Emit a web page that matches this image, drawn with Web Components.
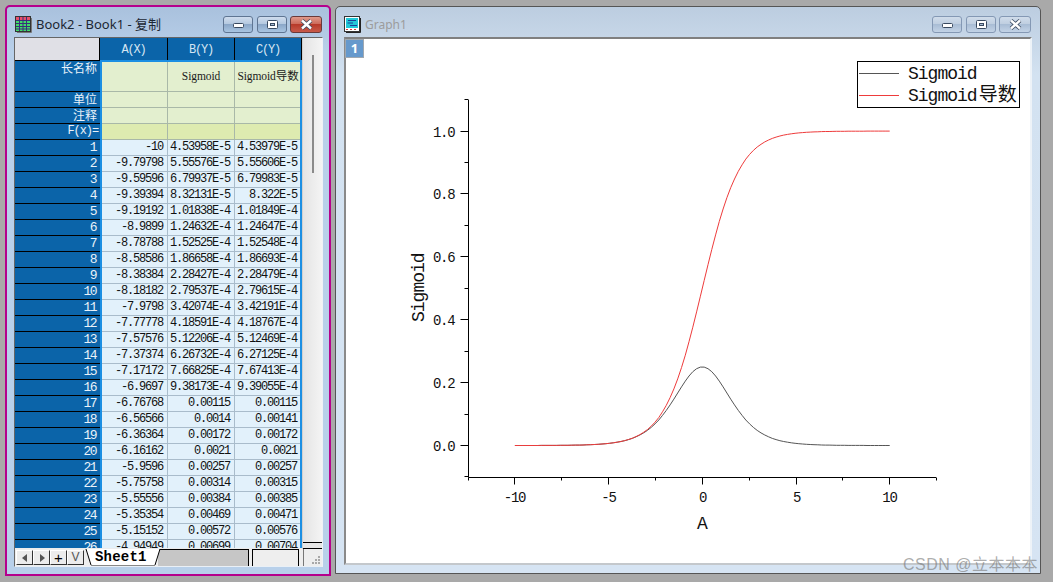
<!DOCTYPE html>
<html>
<head>
<meta charset="utf-8">
<title>Origin</title>
<style>
  html, body { margin: 0; padding: 0; background: #a9a9a9; }
</style>
</head>
<body>
<desk-top>
  <win-frame active title-text="Book2 - Book1 - 复制" icon="book">
    <work-sheet></work-sheet>
  </win-frame>
  <win-frame title-text="Graph1" icon="graph">
    <graph-plot></graph-plot>
  </win-frame>
  <water-mark>CSDN @立本本本</water-mark>
</desk-top>

<script>
class DeskTop extends HTMLElement {
  constructor() {
    super();
    this.attachShadow({ mode: "open" });
    this.shadowRoot.innerHTML = `
      <style>
        :host {
          display: flex;
          align-items: flex-start;
          gap: 4px;
          position: relative;
          width: 1053px;
          height: 582px;
          box-sizing: border-box;
          padding: 5px 0 0 5px;
          background: #a9a9a9;
          overflow: hidden;
        }
      </style>
      <slot></slot>
    `;
  }
}
customElements.define("desk-top", DeskTop);

const ICONS = {
  book: `<svg width="17" height="17" viewBox="0 0 17 17">
      <rect x="0.5" y="0.5" width="15" height="15" fill="#fff" stroke="#333"/>
      <rect x="1" y="1" width="14" height="3" fill="#e8506a"/>
      <rect x="1" y="5" width="14" height="10" fill="#3fdc6a"/>
      <path d="M1 4.5H15M1 7.5H15M1 10.5H15M1 13H15M4.5 1V15M8 1V15M11.5 1V15" stroke="#3a2f7a" stroke-width="1" fill="none"/>
      <path d="M16.5 2V16.5H2" stroke="#777" fill="none"/>
    </svg>`,
  graph: `<svg width="17" height="17" viewBox="0 0 17 17">
      <rect x="0.5" y="0.5" width="15" height="15" fill="#fff" stroke="#333"/>
      <rect x="2" y="2" width="12" height="10" fill="#22c8d8"/>
      <path d="M4 4.5H12M3.500 7H9M6 9.500H13" stroke="#1a3f9a" fill="none"/>
      <path d="M2 13.500H4M6 13.500H8M10 13.500H12" stroke="#d83a3a" fill="none"/>
      <path d="M16.500 2V16.500H2" stroke="#222" fill="none"/>
    </svg>`
};

class WinFrame extends HTMLElement {
  connectedCallback() {
    if (this.shadowRoot) return;
    this.attachShadow({ mode: "open" });
    const title = this.getAttribute("title-text") || "";
    const icon = ICONS[this.getAttribute("icon")] || "";
    this.shadowRoot.innerHTML = `
      <style>
        :host {
          display: flex;
          flex-direction: column;
          box-sizing: border-box;
          margin-top: 1px;
          width: 706px;
          height: 568px;
          padding: 0 8px 8px 8px;
          border: 1px solid #555;
          border-radius: 5px 5px 0 0;
          background: linear-gradient(#bccde0, #d3e2f1 12%, #d6e4f3);
          font-family: "Noto Sans", "Noto Sans CJK SC", sans-serif;
        }
        :host([active]) {
          margin-top: 0;
          width: 326px;
          height: 571px;
          padding: 0 6px 7px 7px;
          border: 2px solid #b5008c;
          background: linear-gradient(#a9c1dd, #b9d0ea 8%, #b8d0ea);
        }
        .bar { flex: none; height: 30px; display: flex; align-items: flex-start; }
        .ico { width: 17px; height: 17px; margin: 9px 4px 0 0; }
        :host([active]) .ico { margin-top: 9px; margin-left: 1px; margin-right: 4px; }
        .title {
          flex: 1;
          margin-top: 9px;
          font-size: 12px;
          line-height: 17px;
          color: #9c9c9c;
          white-space: nowrap;
        }
        :host([active]) .title { color: #1c2733; font-size: 13px; }
        .btns { display: flex; gap: 4px; margin-top: 9px; margin-right: 1px; }
        .b {
          width: 30px;
          height: 17px;
          box-sizing: border-box;
          border: 1px solid #8498b4;
          border-radius: 3px;
          background: linear-gradient(#d0dcea, #c0cfe1 45%, #a9bdd5 50%, #c3d3e6);
          display: flex;
          align-items: center;
          justify-content: center;
        }
        :host([active]) .b { background: linear-gradient(#cfdced, #b5c9e0 45%, #8ba7c8 50%, #a9c5e2); border-color: #5f7592; }
        :host([active]) .b.x { background: linear-gradient(#e09a8c, #cd6b5b 45%, #b73a2a 50%, #c85a4a); border-color: #6a3a3a; }
        .b.x { width: 32px; margin-left: -1px; }
        .body {
          flex: 1;
          min-height: 0;
          display: flex;
          border-top: 2px solid #808080;
          border-left: 2px solid #8a8a8a;
          border-right: 2px solid #eef3f8;
          border-bottom: 2px solid #c4c8cc;
          background: #fff;
        }
        :host([active]) .body { border: 0; border-top: 1px solid #666; border-left: 1px solid #666; border-bottom: 1px solid #eaf0f6; border-right: 1px solid #eef2f6; background: #ececec; }
      </style>
      <div class="bar">
        <span class="ico">${icon}</span>
        <span class="title">${title}</span>
        <div class="btns">
          <div class="b"><svg width="13" height="9" viewBox="0 0 13 9"><rect x="1.500" y="3.500" width="10" height="4" rx="1" fill="#fff" stroke="#3a4a60"/></svg></div>
          <div class="b"><svg width="13" height="11" viewBox="0 0 13 11"><rect x="1.500" y="1.500" width="10" height="8" rx="1" fill="#fff" stroke="#3a4a60"/><rect x="4.500" y="4.500" width="4" height="2" fill="#a9bdd5" stroke="#3a4a60"/></svg></div>
          <div class="b x"><svg width="15" height="11" viewBox="0 0 15 11"><path d="M3 1.500L12 9.500M12 1.500L3 9.500" stroke="#3a4a60" stroke-width="4"/><path d="M3 1.500L12 9.500M12 1.500L3 9.500" stroke="#fff" stroke-width="2.400"/></svg></div>
        </div>
      </div>
      <div class="body"><slot></slot></div>
    `;
  }
}
customElements.define("win-frame", WinFrame);

const ROWS = [
  ["-10", "4.53958E-5", "4.53979E-5"],
  ["-9.79798", "5.55576E-5", "5.55606E-5"],
  ["-9.59596", "6.79937E-5", "6.79983E-5"],
  ["-9.39394", "8.32131E-5", "8.322E-5"],
  ["-9.19192", "1.01838E-4", "1.01849E-4"],
  ["-8.9899", "1.24632E-4", "1.24647E-4"],
  ["-8.78788", "1.52525E-4", "1.52548E-4"],
  ["-8.58586", "1.86658E-4", "1.86693E-4"],
  ["-8.38384", "2.28427E-4", "2.28479E-4"],
  ["-8.18182", "2.79537E-4", "2.79615E-4"],
  ["-7.9798", "3.42074E-4", "3.42191E-4"],
  ["-7.77778", "4.18591E-4", "4.18767E-4"],
  ["-7.57576", "5.12206E-4", "5.12469E-4"],
  ["-7.37374", "6.26732E-4", "6.27125E-4"],
  ["-7.17172", "7.66825E-4", "7.67413E-4"],
  ["-6.9697", "9.38173E-4", "9.39055E-4"],
  ["-6.76768", "0.00115", "0.00115"],
  ["-6.56566", "0.0014", "0.00141"],
  ["-6.36364", "0.00172", "0.00172"],
  ["-6.16162", "0.0021", "0.0021"],
  ["-5.9596", "0.00257", "0.00257"],
  ["-5.75758", "0.00314", "0.00315"],
  ["-5.55556", "0.00384", "0.00385"],
  ["-5.35354", "0.00469", "0.00471"],
  ["-5.15152", "0.00572", "0.00576"],
  ["-4.94949", "0.00699", "0.00704"],
];

class WorkSheet extends HTMLElement {
  constructor() {
    super();
    this.attachShadow({ mode: "open" });
  }
  connectedCallback() {
    const labelRows = [
      ["长名称", "", "Sigmoid", "Sigmoid导数", "tall"],
      ["单位", "", "", "", ""],
      ["注释", "", "", "", ""],
      ["F(x)=", "", "", "", "fx"],
    ];
    // cells get an explicit place, the selection frame shares their grid tracks
    const at = (r, c) => `style="grid-area:${r}/${c}"`;
    let cells = `<div class="corner" ${at(1, 1)}></div>`;
    ["A(X)", "B(Y)", "C(Y)"].forEach((h, i) => { cells += `<div class="ch" ${at(1, i + 2)}>${h}</div>`; });
    labelRows.forEach((r, i) => {
      const cls = r[4], row = i + 2;
      cells += `<div class="rh lab ${cls}" ${at(row, 1)}>${r[0]}</div>`;
      cells += `<div class="c lab ${cls}" ${at(row, 2)}></div>`;
      cells += `<div class="c lab ${cls}" ${at(row, 3)}><span>${r[2]}</span></div>`;
      cells += `<div class="c lab ${cls}" ${at(row, 4)}><span>${r[3]}</span></div>`;
    });
    ROWS.forEach((r, i) => {
      cells += `<div class="rh num" ${at(i + 6, 1)}>${i + 1}</div>`;
      r.forEach((v, j) => { cells += `<div class="c num" ${at(i + 6, j + 2)}>${v}</div>`; });
    });

    this.shadowRoot.innerHTML = `
      <style>
        :host {
          display: flex;
          flex-direction: column;
          flex: 1;
          min-width: 0;
          font-family: "Liberation Mono", monospace;
        }
        .main { flex: 1; min-height: 0; display: flex; }
        .grid {
          flex: none;
          width: 287px;
          display: grid;
          grid-template-columns: 85px 68px 67px 67px;
          grid-template-rows: 23px 31px 16px 16px 16px repeat(26, 16px);
          height: 510px;
          overflow: hidden;
        }
        .corner { background: #e0e0e6; border-bottom: 1px solid #000; border-right: 1px solid #000; }
        .ch {
          background: #0b64a9;
          color: #d7e6f3;
          font-size: 12px;
          letter-spacing: -1.2px;
          display: flex;
          align-items: center;
          justify-content: center;
          padding-top: 2px;
          box-sizing: border-box;
          border-right: 1px solid #000;
          border-bottom: 1px solid #000;
        }
        .rh {
          background: #0b64a9;
          color: #e9f2fa;
          border-bottom: 1px solid #000;
          text-align: right;
          padding-right: 4px;
          line-height: 15px;
          box-sizing: border-box;
          font-size: 13px;
          letter-spacing: -1.5px;
          white-space: nowrap;
        }
        .rh.lab { font: 12px/14px "Noto Sans CJK SC", sans-serif; letter-spacing: 0; padding-right: 3px; }
        .rh.lab.fx { font: 12px/14px "Liberation Mono", monospace; letter-spacing: -1.1px; padding-right: 2px; }
        .c {
          background: #e2f1fb;
          color: #111;
          border-right: 1px solid #a9bccb;
          border-bottom: 1px solid #a9bccb;
          font-size: 12px;
          letter-spacing: -1.2px;
          line-height: 15px;
          text-align: right;
          padding-right: 4px;
          box-sizing: border-box;
          white-space: nowrap;
          overflow: hidden;
        }
        .c.lab { background: #e3efcf; border-color: #a9b8a8; }
        .c.lab.fx { background: #deebb0; }
        .c.tall {
          display: flex;
          align-items: center;
          justify-content: center;
          padding: 0;
          font: 11.5px/14px "Liberation Serif", "Noto Sans CJK SC", serif;
          letter-spacing: -.1px;
          color: #1a1a1a;
        }
        .sel {
          grid-column: 2 / 5;
          grid-row: 2 / 32;
          border: 2px solid #1c8fe3;
          border-bottom: 0;
          margin-top: -1px;
          pointer-events: none;
        }
        .scroll {
          flex: 1;
          display: flex;
          flex-direction: column;
          background: linear-gradient(90deg, #e4e4e4, #f4f4f4);
          border-left: 1px solid #d0d0d0;
        }
        .thumb { width: 2px; height: 118px; margin: 17px 0 0 9px; background: #8a8a8a; }
        .split { margin-top: auto; height: 5px; border-top: 1px solid #000; border-bottom: 1px solid #000; background: #e6e6e6; }
      </style>
      <div class="main">
        <div class="grid">${cells}<div class="sel"></div></div>
        <div class="scroll"><div class="thumb"></div><div class="split"></div></div>
      </div>
      <sheet-tabs name="Sheet1"></sheet-tabs>
    `;
  }
}
customElements.define("work-sheet", WorkSheet);

class SheetTabs extends HTMLElement {
  constructor() {
    super();
    this.attachShadow({ mode: "open" });
  }
  connectedCallback() {
    const name = this.getAttribute("name") || "";
    this.shadowRoot.innerHTML = `
      <style>
        :host {
          display: flex;
          flex: none;
          height: 17px;
          background: #eeeeee;
          font-family: "Liberation Mono", monospace;
        }
        .navs { display: flex; padding: 1px 0 0 1px; gap: 0; height: 15px; }
        .n {
          width: 17px;
          height: 15px;
          box-sizing: border-box;
          background: #ececec;
          border: 1px solid #fff;
          border-right-color: #333;
          border-bottom-color: #333;
          color: #555;
          font: 12px/13px "Liberation Sans", sans-serif;
          text-align: center;
          display: flex;
          align-items: center;
          justify-content: center;
        }
        .n.plus { color: #000; font-size: 15px; }
        .tab {
          position: relative;
          width: 76px;
          height: 17px;
          margin-left: 1px;
          flex: none;
        }
        .tab svg { position: absolute; left: 0; top: 0; }
        .tab span {
          position: absolute;
          left: 10px;
          top: 0;
          font-size: 14px;
          letter-spacing: .2px;
          line-height: 17px;
          font-weight: bold;
          color: #000;
        }
        .rest {
          flex: none;
          width: 90px;
          margin-left: -3px;
          background: #c6c6c6;
          border-top: 1px solid #000;
          border-right: 1px solid #000;
        }
        .mid {
          flex: none;
          width: 45px;
          margin-left: 3px;
          border-top: 1px solid #000;
          border-left: 1px solid #000;
          border-right: 1px solid #000;
          background: #eeeeee;
        }
        .grip { flex: 1; position: relative; margin-left: 4px; border-left: 1px solid #777; }
        .grip svg { position: absolute; right: 1px; bottom: 1px; }
      </style>
      <div class="navs">
        <div class="n"><svg width="8" height="10" viewBox="0 0 8 10"><path d="M6 1V9L1 5Z" fill="#555"/></svg></div>
        <div class="n"><svg width="8" height="10" viewBox="0 0 8 10"><path d="M2 1V9L7 5Z" fill="#555"/></svg></div>
        <div class="n plus">+</div>
        <div class="n">V</div>
      </div>
      <div class="tab">
        <svg width="76" height="17" viewBox="0 0 76 17">
          <path d="M1 0L6 16H70L75 0Z" fill="#fff"/>
          <path d="M1 0L6 16M75 0L70 16" stroke="#000" fill="none"/>
          <path d="M6 16.500H70" stroke="#888"/>
        </svg>
        <span>${name}</span>
      </div>
      <div class="rest"></div>
      <div class="mid"></div>
      <div class="grip"><svg width="10" height="10" viewBox="0 0 10 10"><path d="M7 1h2v2H7zM4 4h2v2H4zM7 4h2v2H7zM1 7h2v2H1zM4 7h2v2H4zM7 7h2v2H7z" fill="#a8a8a8"/></svg></div>
    `;
  }
}
customElements.define("sheet-tabs", SheetTabs);

class GraphPlot extends HTMLElement {
  constructor() {
    super();
    this.attachShadow({ mode: "open" });
  }
  connectedCallback() {
    // svg origin sits at the page pixel (346, 39), the white client area corner
    const ox = 346, oy = 39;
    const px = x => 702.3 + 18.74 * x - ox;
    const py = v => 445.5 - 314.4 * v - oy;
    const crisp = n => Math.round(n) + 0.5;

    let sig = "", der = "";
    for (let i = 0; i < 100; i++) {
      const x = -10 + i * 20 / 99;
      const s = 1 / (1 + Math.exp(-x));
      sig += (i ? "L" : "M") + px(x).toFixed(1) + " " + py(s).toFixed(1);
      der += (i ? "L" : "M") + px(x).toFixed(1) + " " + py(s * (1 - s)).toFixed(1);
    }

    const axisX = crisp(467.5 - ox), axisY = crisp(476.5 - oy);
    let ticks = `M${axisX} ${100 - oy}V${axisY}H${936 - ox}`;
    let labels = "";
    [0, 0.2, 0.4, 0.6, 0.8, 1].forEach(v => {
      const y = crisp(py(v) - 0.5);
      ticks += `M${axisX - 8} ${y}H${axisX}`;
      labels += `<text class="tick" x="${axisX - 14}" y="${y + 5}" text-anchor="end">${v.toFixed(1)}</text>`;
    });
    [-0.1, 0.1, 0.3, 0.5, 0.7, 0.9, 1.1].forEach(v => {
      const y = crisp(py(v) - 0.5);
      ticks += `M${axisX - 4} ${y}H${axisX}`;
    });
    [-10, -5, 0, 5, 10].forEach(x => {
      const t = crisp(px(x) - 0.5);
      ticks += `M${t} ${axisY}V${axisY + 7}`;
      labels += `<text class="tick" x="${t}" y="${axisY + 24}" text-anchor="middle">${x}</text>`;
    });
    [-12.5, -7.5, -2.5, 2.5, 7.5, 12.5].forEach(x => {
      const t = crisp(px(x) - 0.5);
      ticks += `M${t} ${axisY}V${axisY + 3}`;
    });

    this.shadowRoot.innerHTML = `
      <style>
        :host { display: block; position: relative; flex: 1; min-width: 0; background: #fff; }
        svg { display: block; width: 100%; height: 100%; }
        text { font-family: "Liberation Mono", "Noto Sans CJK SC", monospace; fill: #111; }
        .tick { font-size: 14px; letter-spacing: -1.2px; }
        .big { font-size: 18px; letter-spacing: -1px; }
        .big tspan { letter-spacing: 0; font-size: 19px; }
        .one { position: absolute; left: -1px; top: 0; width: 19px; height: 19px; box-sizing: border-box;
          background: #6699cc; border: 1px solid #a0a8b0; color: #fff;
          font: bold 13px/17px "Noto Sans", sans-serif; text-align: center; }
      </style>
      <svg viewBox="0 0 684 524">
        <path d="${ticks}" fill="none" stroke="#000" stroke-width="1"/>
        <path d="${der}" fill="none" stroke="#555" stroke-width="1"/>
        <path d="${sig}" fill="none" stroke="#ee3b3b" stroke-width="1"/>
        ${labels}
        <text class="big" x="${702 - ox}" y="${529 - oy}" text-anchor="middle">A</text>
        <text class="big" transform="translate(${424 - ox} ${322 - oy}) rotate(-90)">Sigmoid</text>
        <rect x="${857.5 - ox}" y="${61.5 - oy}" width="162" height="46" fill="#fff" stroke="#000"/>
        <path d="M${859 - ox} ${73.5 - oy}H${899 - ox}" stroke="#555"/>
        <path d="M${859 - ox} ${95.5 - oy}H${899 - ox}" stroke="#ee3b3b"/>
        <text class="big" x="${908 - ox}" y="${79 - oy}">Sigmoid</text>
        <text class="big" x="${908 - ox}" y="${101 - oy}">Sigmoid<tspan dx="2">导数</tspan></text>
      </svg>
      <div class="one">1</div>
    `;
  }
}
customElements.define("graph-plot", GraphPlot);

class WaterMark extends HTMLElement {
  constructor() {
    super();
    this.attachShadow({ mode: "open" });
    this.shadowRoot.innerHTML = `
      <style>
        :host {
          position: absolute;
          right: 15px;
          bottom: 8px;
          font: 16px/18px "Liberation Sans", "Noto Sans CJK SC", sans-serif;
          color: rgba(120, 120, 120, .62);
          white-space: nowrap;
          letter-spacing: .5px;
        }
      </style>
      <slot></slot>
    `;
  }
}
customElements.define("water-mark", WaterMark);
</script>
</body>
</html>
